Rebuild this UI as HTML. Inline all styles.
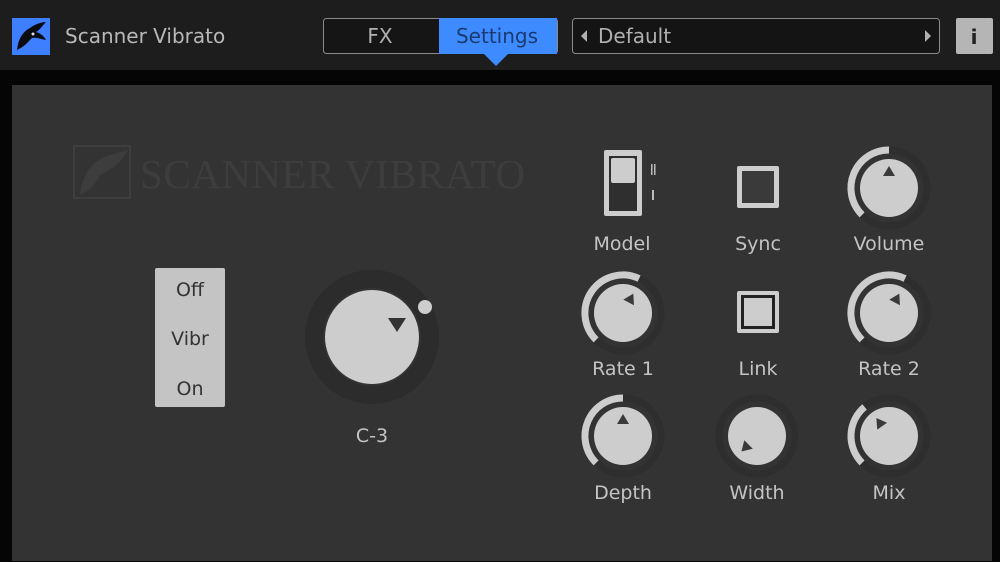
<!DOCTYPE html>
<html><head><meta charset="utf-8"><style>
html,body{margin:0;padding:0;width:1000px;height:562px;overflow:hidden;background:#000;font-family:"DejaVu Sans","Liberation Sans",sans-serif}
</style></head><body>
<svg width="1000" height="562" xmlns="http://www.w3.org/2000/svg" font-family="DejaVu Sans, Liberation Sans, sans-serif">
<rect x="0" y="0" width="1000" height="70" fill="#1d1d1d"/>
<rect x="0" y="70" width="1000" height="492" fill="#050505"/>
<rect x="12" y="85" width="980" height="476" fill="#333333"/>
<!-- logo -->
<rect x="12" y="18" width="38" height="37" fill="#3d7fff"/>
<path d="M17 50 C18 40 22 32 30 28 C35 24 42 22 46 22 C42 26 40 30 36 32 C40 33 44 36 46 40 C41 39 36 37 32 38 C28 42 24 47 17 50Z" fill="#0b0b12"/>
<circle cx="33" cy="34" r="1.5" fill="#ddd"/>
<text x="65" y="43" font-size="20" fill="#b8b8b8">Scanner Vibrato</text>
<!-- tabs -->
<rect x="323.5" y="18.5" width="234" height="35" rx="3" fill="#151515" stroke="#8a8a8a"/>
<rect x="439" y="18" width="118" height="36" fill="#3d8bff"/>
<polygon points="484,54 508,54 496,66" fill="#3d8bff"/>
<text x="380" y="43" font-size="20" fill="#b0b0b0" text-anchor="middle">FX</text>
<text x="497" y="43" font-size="20" fill="#1a3a70" text-anchor="middle">Settings</text>
<!-- preset -->
<rect x="572.5" y="18.5" width="367" height="35" rx="3" fill="#141414" stroke="#8a8a8a"/>
<polygon points="587,30 587,42 581,36" fill="#b0b0b0"/>
<polygon points="925,30 925,42 931,36" fill="#b0b0b0"/>
<text x="598" y="43" font-size="20" fill="#b0b0b0">Default</text>
<rect x="956" y="18" width="37" height="36" rx="2" fill="#b5b5b5"/>
<text x="974" y="44" font-size="20" font-weight="bold" fill="#222" text-anchor="middle">i</text>
<!-- watermark -->
<g opacity="0.6">
<rect x="74" y="146" width="56" height="52" fill="none" stroke="#444" stroke-width="2"/>
<path d="M80 195 C82 175 92 160 110 155 L128 150 C120 165 110 170 100 175 C95 185 88 192 80 195Z" fill="#444"/>
<text x="140" y="188" font-family="Liberation Serif, serif" font-size="41" textLength="385" fill="#454545">SCANNER VIBRATO</text>
</g>
<!-- switch Off/Vibr/On -->
<rect x="155" y="268" width="70" height="139" rx="2" fill="#c4c4c4"/>
<text x="190" y="296" font-size="19" fill="#333" text-anchor="middle">Off</text>
<text x="190" y="345" font-size="19" fill="#333" text-anchor="middle">Vibr</text>
<text x="190" y="395" font-size="19" fill="#333" text-anchor="middle">On</text>
<!-- big knob -->
<circle cx="372" cy="337" r="58" fill="none" stroke="#2c2c2c" stroke-width="18"/>
<circle cx="372" cy="337" r="47" fill="#cdcdcd"/>
<circle cx="425" cy="307" r="7" fill="#cdcdcd"/>
<polygon points="388,318 406,318 397,332" fill="#333"/>
<text x="372" y="442" font-size="19" fill="#c4c4c4" text-anchor="middle">C-3</text>
<!-- model switch -->
<rect x="604" y="150" width="38" height="66" rx="2" fill="#cdcdcd"/>
<rect x="609" y="156" width="28" height="55" fill="#2f2f2f"/>
<rect x="611" y="158" width="24" height="25" rx="2" fill="#cdcdcd"/>
<rect x="651" y="164" width="1.5" height="11" fill="#bbb"/><rect x="654" y="164" width="1.5" height="11" fill="#bbb"/>
<rect x="652" y="190" width="2" height="10" fill="#bbb"/>
<text x="622" y="250" font-size="19" fill="#c4c4c4" text-anchor="middle">Model</text>
<!-- sync -->
<rect x="737" y="166" width="42" height="42" rx="2" fill="#cdcdcd"/>
<rect x="742" y="171" width="32" height="32" fill="#3a3a3a"/>
<text x="758" y="250" font-size="19" fill="#c4c4c4" text-anchor="middle">Sync</text>
<!-- link -->
<rect x="737" y="291" width="42" height="42" rx="2" fill="#cdcdcd"/>
<rect x="741" y="295" width="34" height="34" fill="#222"/>
<rect x="744" y="298" width="28" height="28" fill="#cdcdcd"/>
<text x="758" y="375" font-size="19" fill="#c4c4c4" text-anchor="middle">Link</text>
<g fill="none" stroke-width="7">
 <circle cx="889" cy="188" r="38" stroke="#2e2e2e"/>
 <path d="M862.1 214.9 A38 38 0 0 1 889 150" stroke="#cdcdcd"/>
 <circle cx="623" cy="313" r="38" stroke="#2e2e2e"/>
 <path d="M596.1 339.9 A38 38 0 0 1 639.1 278.6" stroke="#cdcdcd"/>
 <circle cx="889" cy="313" r="38" stroke="#2e2e2e"/>
 <path d="M862.1 339.9 A38 38 0 0 1 905.1 278.6" stroke="#cdcdcd"/>
 <circle cx="623" cy="436" r="38" stroke="#2e2e2e"/>
 <path d="M596.1 462.9 A38 38 0 0 1 623 398" stroke="#cdcdcd"/>
 <circle cx="757" cy="436" r="38" stroke="#2e2e2e"/>
 <circle cx="889" cy="436" r="38" stroke="#2e2e2e"/>
 <path d="M862.1 462.9 A38 38 0 0 1 864.6 406.9" stroke="#cdcdcd"/>
</g>
<g fill="#cdcdcd">
 <circle cx="889" cy="188" r="29"/><circle cx="623" cy="313" r="29"/><circle cx="889" cy="313" r="29"/>
 <circle cx="623" cy="436" r="29"/><circle cx="757" cy="436" r="29"/><circle cx="889" cy="436" r="29"/>
</g>
<g fill="#3a3a3a">
 <polygon points="-6,-12 6,-12 0,-22" transform="translate(889,188)"/>
 <polygon points="-6,-12 6,-12 0,-22" transform="translate(623,313) rotate(28)"/>
 <polygon points="-6,-12 6,-12 0,-22" transform="translate(889,313) rotate(28)"/>
 <polygon points="-6,-12 6,-12 0,-22" transform="translate(623,436)"/>
 <polygon points="-6,-12 6,-12 0,-22" transform="translate(757,436) rotate(-135)"/>
 <polygon points="-6,-12 6,-12 0,-22" transform="translate(889,436) rotate(-35)"/>
</g>
<g font-size="19" fill="#c4c4c4" text-anchor="middle">
 <text x="889" y="250">Volume</text>
 <text x="623" y="375">Rate 1</text>
 <text x="889" y="375">Rate 2</text>
 <text x="623" y="499">Depth</text>
 <text x="757" y="499">Width</text>
 <text x="889" y="499">Mix</text>
</g>
</svg>
</body></html>
